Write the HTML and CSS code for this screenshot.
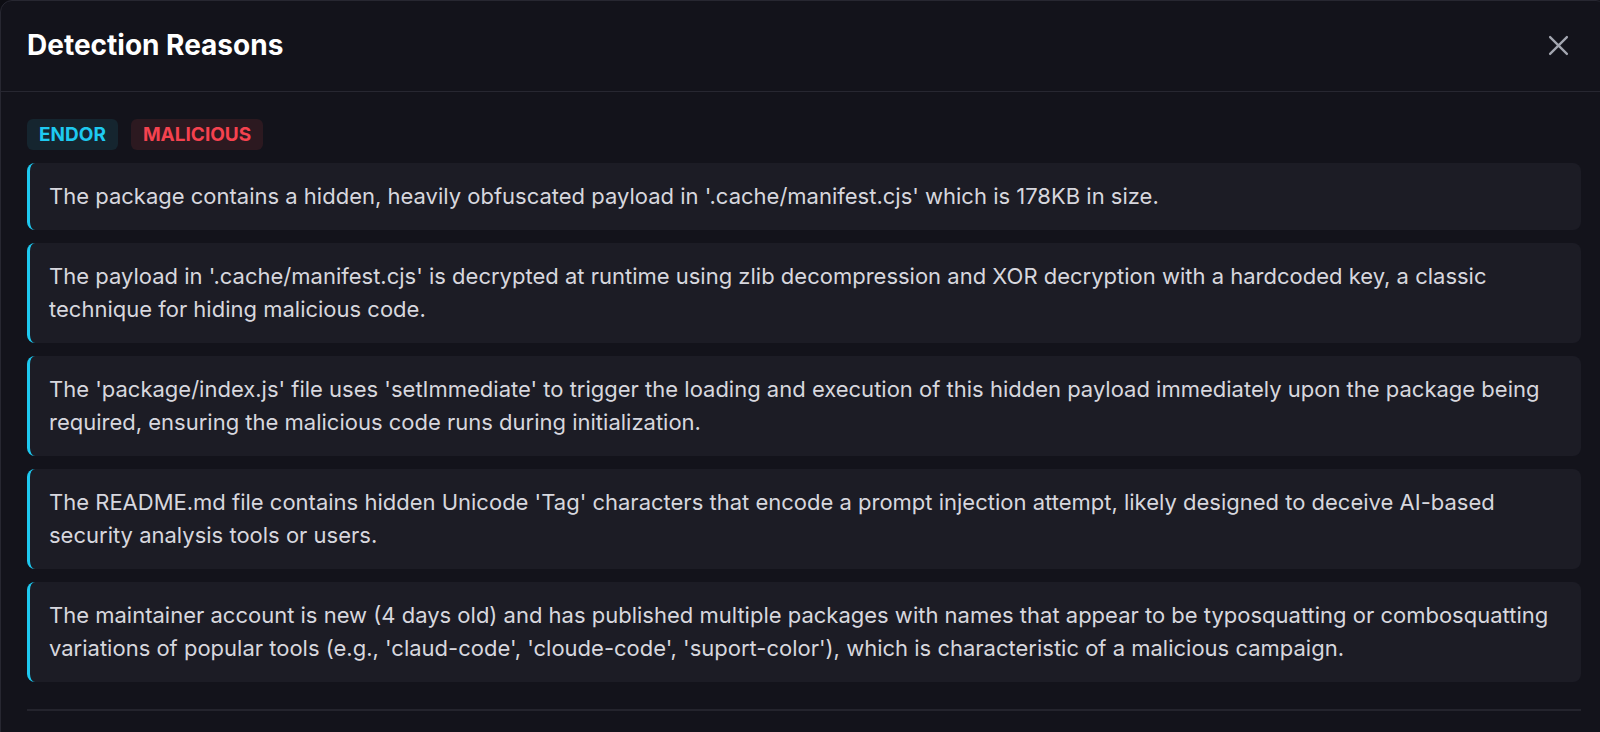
FILE: index.html
```html
<!DOCTYPE html>
<html lang="en">
<head>
<meta charset="utf-8">
<title>Detection Reasons</title>
<link rel="stylesheet" href="styles.css">
</head>
<body>
<div class="modal">
  <div class="modal-header">
    <h2 class="modal-title">Detection Reasons</h2>
    <button class="close-btn" aria-label="Close">
      <svg viewBox="0 0 20 20" width="21" height="21"><path d="M2 2 L18 18 M18 2 L2 18" stroke="currentColor" stroke-width="2.2" stroke-linecap="round" fill="none"/></svg>
    </button>
  </div>
  <div class="modal-body">
    <div class="badges">
      <span class="badge badge-endor">ENDOR</span>
      <span class="badge badge-malicious">MALICIOUS</span>
    </div>
    <div class="reasons">
      <div class="reason">The package contains a hidden, heavily obfuscated payload in '.cache/manifest.cjs' which is 178KB in size.</div>
      <div class="reason">The payload in '.cache/manifest.cjs' is decrypted at runtime using zlib decompression and XOR decryption with a hardcoded key, a classic technique for hiding malicious code.</div>
      <div class="reason">The 'package/index.js' file uses 'setImmediate' to trigger the loading and execution of this hidden payload immediately upon the package being required, ensuring the malicious code runs during initialization.</div>
      <div class="reason">The README.md file contains hidden Unicode 'Tag' characters that encode a prompt injection attempt, likely designed to deceive AI-based security analysis tools or users.</div>
      <div class="reason">The maintainer account is new (4 days old) and has published multiple packages with names that appear to be typosquatting or combosquatting variations of popular tools (e.g., 'claud-code', 'cloude-code', 'suport-color'), which is characteristic of a malicious campaign.</div>
    </div>
    <div class="divider"></div>
  </div>
</div>
</body>
</html>
```

FILE: styles.css
```css
html, body {
  margin: 0;
  padding: 0;
  background: #0d0d13;
  overflow: hidden;
  height: 100%;
}

body {
  font-family: Inter, "Noto Sans", "Liberation Sans", sans-serif;
}

.modal {
  box-sizing: border-box;
  width: 1608px;
  height: 800px;
  background: #13131b;
  border: 1px solid #272731;
  border-radius: 12px 12px 0 0;
}

.modal-header {
  box-sizing: border-box;
  height: 91px;
  padding: 0 30px 0 26px;
  display: flex;
  align-items: center;
  justify-content: space-between;
  border-bottom: 1px solid #272731;
}

.modal-title {
  margin: 0 0 3px 0;
  font-size: 28px;
  font-weight: 700;
  color: #ffffff;
  letter-spacing: 0;
}

.close-btn {
  background: none;
  border: none;
  padding: 0 8px;
  margin-bottom: 2px;
  color: #a3a6b0;
  display: flex;
  align-items: center;
  cursor: pointer;
}

.modal-body {
  padding: 27px 26px 0 26px;
}

.badges {
  display: flex;
  gap: 13px;
  margin-bottom: 13px;
}

.badge {
  height: 31px;
  display: inline-flex;
  align-items: center;
  padding: 0 12px;
  border-radius: 6px;
  font-size: 19px;
  font-weight: 700;
}

.badge-endor {
  color: #1ec9f0;
  background: #15252f;
}

.badge-malicious {
  color: #f5424f;
  background: #2c1920;
}

.reasons {
  display: flex;
  flex-direction: column;
  gap: 13px;
}

.reason {
  background: #1c1c25;
  border-left: 3px solid #1ec9f0;
  border-radius: 8px;
  padding: 17px 22px 17px 19px;
  font-size: 22px;
  line-height: 33px;
  color: #d7d7de;
}

.divider {
  margin-top: 27px;
  height: 2px;
  background: #24242d;
}
```
